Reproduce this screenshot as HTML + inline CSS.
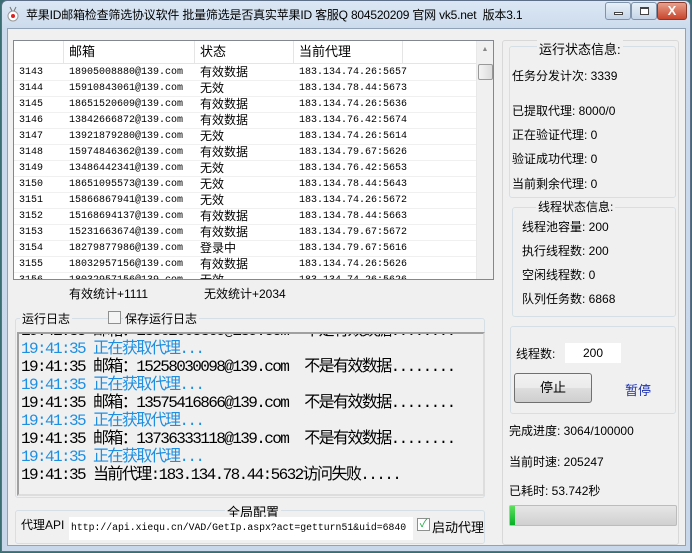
<!DOCTYPE html>
<html><head><meta charset="utf-8"><style>
*{margin:0;padding:0;box-sizing:border-box}
body{width:692px;height:553px;overflow:hidden;background:#3a6e72;font-family:"Liberation Sans","Noto Sans CJK SC",sans-serif;font-size:12px;color:#000;position:relative}
.a{position:absolute;white-space:nowrap}
.win{position:absolute;left:1px;top:0;width:690px;height:552px;background:linear-gradient(#dbe7f4,#cbdaec 30px,#c8d8ea);border:1px solid #5c6f86;border-radius:6px 6px 0 0}
.client{position:absolute;left:7px;top:28px;width:679px;height:518px;background:#f0f0f0;border:1px solid #8fa2b8}
.mono{font-family:"Liberation Mono","Noto Sans CJK SC",monospace}
.grp{position:absolute;border:1px solid #d5dfe5;border-radius:3px}
.lbl{background:#f0f0f0;padding:0 2px}
.log div{height:18px;line-height:18px;font-size:16px;font-family:"Liberation Mono","Noto Sans CJK SC",monospace;letter-spacing:-1.6px}
.log div span{letter-spacing:0}
.b{color:#1e8ee0}
</style></head><body>
<div class="win"></div>
<div class="a" style="left:6px;top:6px;width:14px;height:16px;"><svg width="14" height="16"><ellipse cx="7" cy="10" rx="5" ry="5" fill="#fff" stroke="#999"/><circle cx="7" cy="10" r="2" fill="#d22"/><path d="M4 1l2 4M10 1l-2 4" stroke="#777"/></svg></div>
<div class="a" style="left:26px;top:6px;font-size:12px;letter-spacing:-0.2px;color:#000">苹果ID邮箱检查筛选协议软件 批量筛选是否真实苹果ID 客服Q 804520209 官网 vk5.net &nbsp;版本3.1</div>
<div class="a" style="left:605px;top:2px;width:26px;height:18px;border:1px solid #7f93ab;border-radius:3px;background:linear-gradient(#e8f0f8,#c5d5e8)"><div style="margin:9px 8px 0;width:9px;height:3px;border:1px solid #444;background:#fff"></div></div>
<div class="a" style="left:631px;top:2px;width:26px;height:18px;border:1px solid #7f93ab;border-radius:3px;background:linear-gradient(#e8f0f8,#c5d5e8)"><div style="margin:4px 8px 0;width:9px;height:8px;border:1px solid #444;border-top-width:2px;background:#fff"></div></div>
<div class="a" style="left:657px;top:2px;width:30px;height:18px;border:1px solid #8a3a2a;border-radius:3px;background:linear-gradient(#e8a08c,#c8452c);color:#fff;font-weight:bold;font-size:13px;text-align:center;line-height:16px">X</div>
<div class="client"></div>

<!-- table -->
<div class="a" style="left:13px;top:40px;width:481px;height:240px;background:#fff;border:1px solid #828790;overflow:hidden">
 <div class="a" style="left:0;top:0;width:462px;height:23px;border-bottom:1px solid #e5e5e5;font-size:13px;line-height:22px">
  <span class="a" style="left:55px">邮箱</span><span class="a" style="left:186px">状态</span><span class="a" style="left:285px">当前代理</span>
  <span class="a" style="left:49px;top:0;height:22px;border-left:1px solid #e5e5e5"></span>
  <span class="a" style="left:180px;top:0;height:22px;border-left:1px solid #e5e5e5"></span>
  <span class="a" style="left:279px;top:0;height:22px;border-left:1px solid #e5e5e5"></span>
  <span class="a" style="left:388px;top:0;height:22px;border-left:1px solid #e5e5e5"></span>
 </div>
 <div class="a" id="rows" style="left:0;top:24px;width:462px"></div>
 <div class="a" style="left:462px;top:0;width:17px;height:238px;background:#f0f0f0;border-left:1px solid #e8e8e8">
  <div style="text-align:center;font-size:7px;color:#888;margin-top:5px">▲</div>
  <div class="a" style="left:1px;top:23px;width:15px;height:16px;border:1px solid #999;border-radius:2px;background:linear-gradient(90deg,#f4f4f4,#dcdcdc)"></div>
 </div>
</div>

<div class="a" style="left:69px;top:285px">有效统计+1111</div>
<div class="a" style="left:204px;top:285px">无效统计+2034</div>

<div class="grp" style="left:15px;top:318px;width:470px;height:180px"></div>
<div class="a lbl" style="left:20px;top:310px">运行日志</div>
<div class="a" style="left:108px;top:311px;width:13px;height:13px;border:1px solid #8e8f8f;background:#f4f4f4"></div>
<div class="a lbl" style="left:123px;top:310px">保存运行日志</div>
<div class="a log" style="left:17px;top:332px;width:468px;height:164px;border:2px solid #a0a0a0;border-right-color:#ddd;border-bottom-color:#ddd;background:#f0f0f0;overflow:hidden">
 <div style="margin-top:-12px;padding-left:2px;height:auto">
 <div>19:41:35 邮箱：13562005369@139.com &nbsp;不是有效数据........</div>
 <div class="b">19:41:35 正在获取代理...</div>
 <div>19:41:35 邮箱：15258030098@139.com &nbsp;不是有效数据........</div>
 <div class="b">19:41:35 正在获取代理...</div>
 <div>19:41:35 邮箱：13575416866@139.com &nbsp;不是有效数据........</div>
 <div class="b">19:41:35 正在获取代理...</div>
 <div>19:41:35 邮箱：13736333118@139.com &nbsp;不是有效数据........</div>
 <div class="b">19:41:35 正在获取代理...</div>
 <div>19:41:35 当前代理:183.134.78.44:5632访问失败.....</div>
 </div>
</div>

<div class="grp" style="left:15px;top:510px;width:470px;height:34px"></div>
<div class="a lbl" style="left:225px;top:502px;font-size:13px">全局配置</div>
<div class="a" style="left:21px;top:516px">代理API</div>
<div class="a mono" style="left:69px;top:517px;width:344px;height:23px;background:#fff;font-size:9.8px;line-height:22px;padding-left:2px;overflow:hidden">http://api.xiequ.cn/VAD/GetIp.aspx?act=getturn51&amp;uid=6840</div>
<div class="a" style="left:417px;top:518px;width:13px;height:13px;border:1px solid #8e8f8f;background:#fff;font-size:11px;line-height:11px;text-align:center;color:#2a4">✓</div>
<div class="a" style="left:432px;top:517px;font-size:13px">启动代理</div>

<!-- right -->
<div class="grp" style="left:502px;top:40px;width:177px;height:505px;border-color:#d8d8d8"></div>
<div class="grp" style="left:509px;top:46px;width:167px;height:152px"></div>
<div class="a lbl" style="left:537px;top:39px;font-size:13px">运行状态信息:</div>
<div class="a" style="left:512px;top:67px">任务分发计次: 3339</div>
<div class="a" style="left:512px;top:102px">已提取代理: 8000/0</div>
<div class="a" style="left:512px;top:126px">正在验证代理: 0</div>
<div class="a" style="left:512px;top:150px">验证成功代理: 0</div>
<div class="a" style="left:512px;top:175px">当前剩余代理: 0</div>
<div class="grp" style="left:512px;top:207px;width:164px;height:110px"></div>
<div class="a lbl" style="left:536px;top:198px">线程状态信息:</div>
<div class="a" style="left:522px;top:218px">线程池容量: 200</div>
<div class="a" style="left:522px;top:242px">执行线程数: 200</div>
<div class="a" style="left:522px;top:266px">空闲线程数: 0</div>
<div class="a" style="left:522px;top:290px">队列任务数: 6868</div>
<div class="grp" style="left:510px;top:326px;width:166px;height:88px"></div>
<div class="a" style="left:516px;top:345px">线程数:</div>
<div class="a" style="left:565px;top:343px;width:56px;height:20px;background:#fff;text-align:center;line-height:20px">200</div>
<div class="a" style="left:514px;top:373px;width:78px;height:30px;border:1px solid #707070;border-radius:3px;background:linear-gradient(#f2f2f2,#ebebeb 50%,#dddddd 51%,#cfcfcf);text-align:center;line-height:28px;font-size:13px">停止</div>
<div class="a" style="left:625px;top:380px;color:#1a2fb0;font-size:13px">暂停</div>
<div class="a" style="left:509px;top:422px">完成进度: 3064/100000</div>
<div class="a" style="left:509px;top:453px">当前时速: 205247</div>
<div class="a" style="left:509px;top:482px">已耗时: 53.742秒</div>
<div class="a" style="left:509px;top:505px;width:168px;height:21px;border:1px solid #bcbcbc;border-radius:2px;background:linear-gradient(#e6e6e6,#d0d0d0)"><div style="width:5px;height:19px;background:linear-gradient(#5ee05e,#06b025)"></div></div>
<script>
var d=[["3143","18905008880","有效数据","183.134.74.26:5657"],["3144","15910843061","无效","183.134.78.44:5673"],["3145","18651520609","有效数据","183.134.74.26:5636"],["3146","13842666872","有效数据","183.134.76.42:5674"],["3147","13921879280","无效","183.134.74.26:5614"],["3148","15974846362","有效数据","183.134.79.67:5626"],["3149","13486442341","无效","183.134.76.42:5653"],["3150","18651095573","无效","183.134.78.44:5643"],["3151","15866867941","无效","183.134.74.26:5672"],["3152","15168694137","有效数据","183.134.78.44:5663"],["3153","15231663674","有效数据","183.134.79.67:5672"],["3154","18279877986","登录中","183.134.79.67:5616"],["3155","18032957156","有效数据","183.134.74.26:5626"],["3156","18032957156","无效","183.134.74.26:5626"]];
var h="";d.forEach(function(r,i){h+='<div style="position:relative;height:16px;border-bottom:1px solid #f0f0f0;font-size:10px;line-height:15px;overflow:hidden"><span class="a mono" style="left:5px">'+r[0]+'</span><span class="a mono" style="left:55px">'+r[1]+'@139.com</span><span class="a" style="left:186px;font-size:12px;line-height:15px">'+r[2]+'</span><span class="a mono" style="left:285px">'+r[3]+'</span></div>'});
document.getElementById("rows").innerHTML=h;
</script>
</body></html>
